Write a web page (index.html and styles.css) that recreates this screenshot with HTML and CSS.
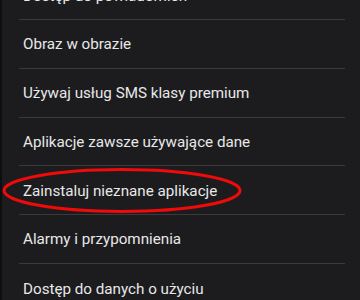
FILE: index.html
```html
<!DOCTYPE html>
<html lang="pl">
<head>
<meta charset="utf-8">
<link rel="stylesheet" href="styles.css">
</head>
<body>
<div class="screen">
  <ul class="list">
    <li class="item">Dostęp do powiadomień</li>
    <li class="item">Obraz w obrazie</li>
    <li class="item">Używaj usług SMS klasy premium</li>
    <li class="item">Aplikacje zawsze używające dane</li>
    <li class="item">Zainstaluj nieznane aplikacje</li>
    <li class="item">Alarmy i przypomnienia</li>
    <li class="item">Dostęp do danych o użyciu</li>
  </ul>
  <svg class="mark" width="244" height="50" viewBox="0 0 244 50">
    <ellipse cx="120" cy="23.5" rx="118" ry="21" fill="none" stroke="#f00a0a" stroke-width="3"/>
  </svg>
</div>
</body>
</html>
```
FILE: styles.css
```css
html, body {
  margin: 0;
  padding: 0;
  background: #1c1c1e;
}
.screen {
  position: relative;
  width: 360px;
  height: 300px;
  overflow: hidden;
  background: #1c1c1e;
  border-left: 2px solid #0e0e0f;
  box-sizing: border-box;
}
.list {
  list-style: none;
  margin: -28.75px 0 0 0;
  padding: 0 15px 0 17px;
}
.item {
  height: 48.75px;
  box-sizing: border-box;
  display: flex;
  align-items: center;
  padding: 1px 0 0 4px;
  border-bottom: 1px solid #3a3a3c;
  font-family: Roboto, "Noto Sans", sans-serif;
  font-size: 15.2px;
  color: #e8e8e8;
}
.item:last-child {
  border-bottom: none;
}
.mark {
  position: absolute;
  left: 0;
  top: 167px;
}
```
